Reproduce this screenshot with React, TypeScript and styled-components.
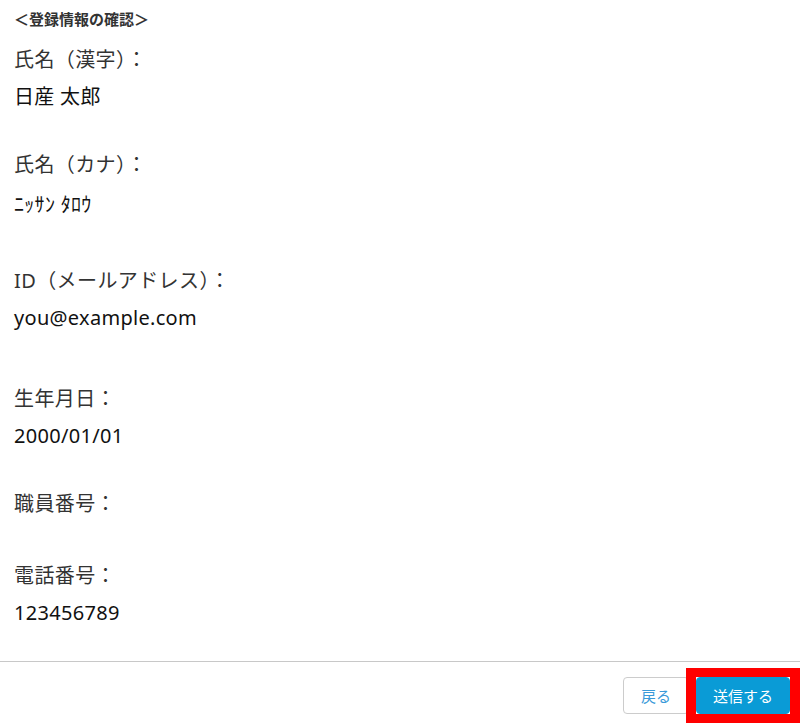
import React, {FC} from 'react';
import styled, {createGlobalStyle} from 'styled-components';

const GlobalStyle = createGlobalStyle`
  html, body {
    margin: 0;
    padding: 0;
    background: #ffffff;
  }
  body {
    font-family: "Noto Sans", "Noto Sans CJK JP", sans-serif;
  }
`;

const Page = styled.div`
  min-height: 100vh;
  display: flex;
  flex-direction: column;
`;

const Main = styled.main`
  flex: 1;
  padding: 8px 14px 0;
`;

const Title = styled.h1`
  margin: 0;
  font-family: "Noto Sans CJK JP", sans-serif;
  font-size: 15px;
  line-height: 22px;
  font-weight: bold;
  color: #333333;
`;

const Field = styled.div<{ $mt: number }>`
  margin-top: ${p => p.$mt}px;
`;

const Label = styled.div`
  font-size: 20px;
  line-height: 28px;
  color: #333333;
  letter-spacing: 0.4px;
`;

const Value = styled.div<{ $mt?: number }>`
  margin-top: ${p => p.$mt ?? 9}px;
  font-size: 20px;
  line-height: 28px;
  color: #111111;
  letter-spacing: 0.3px;
`;

const Footer = styled.footer`
  border-top: 1.5px solid #c8c8c8;
  padding: 15px 10px 9px;
  display: flex;
  justify-content: flex-end;
  gap: 7px;
`;

const Button = styled.button<{ $primary?: boolean }>`
  height: 37px;
  border-radius: 4px;
  font-family: inherit;
  font-size: 15px;
  cursor: pointer;
  border: 1px solid ${p => (p.$primary ? '#0a9bd6' : '#cccccc')};
  background: ${p => (p.$primary ? '#0a9bd6' : '#ffffff')};
  color: ${p => (p.$primary ? '#ffffff' : '#3a9ad9')};
  width: ${p => (p.$primary ? 94 : 66)}px;
  padding: 0;
`;

const Highlight = styled.span`
  position: relative;
  display: inline-flex;

  &::after {
    content: '';
    position: absolute;
    left: -10px;
    right: -10px;
    top: -9px;
    bottom: -9px;
    border: 9px solid #ff0000;
    border-left-width: 10px;
    border-right-width: 10px;
    pointer-events: none;
  }
`;

type Item = { label: string; value?: string; mt: number; vmt?: number };

const items: Item[] = [
  {label: '氏名（漢字）：', value: '日産 太郎', mt: 16},
  {label: '氏名（カナ）：', value: 'ﾆｯｻﾝ ﾀﾛｳ', mt: 40, vmt: 12},
  {label: 'ID（メールアドレス）：', value: 'you@example.com', mt: 48},
  {label: '生年月日：', value: '2000/01/01', mt: 53},
  {label: '職員番号：', mt: 40},
  {label: '電話番号：', value: '123456789', mt: 44},
];

const App: FC = () => {
  return (
    <Page>
      <GlobalStyle/>
      <Main>
        <Title>＜登録情報の確認＞</Title>
        {items.map(item => (
          <Field key={item.label} $mt={item.mt}>
            <Label>{item.label}</Label>
            {item.value && <Value $mt={item.vmt}>{item.value}</Value>}
          </Field>
        ))}
      </Main>
      <Footer>
        <Button>戻る</Button>
        <Highlight>
          <Button $primary>送信する</Button>
        </Highlight>
      </Footer>
    </Page>
  );
};

export default App;
